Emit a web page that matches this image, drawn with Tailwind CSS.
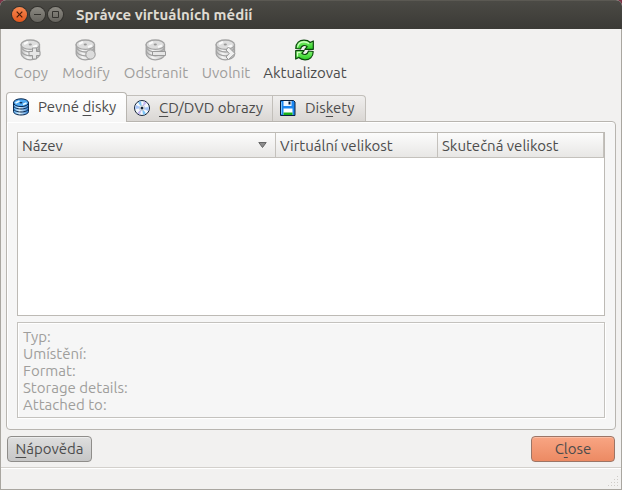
<!DOCTYPE html>
<html lang="cs">
<head>
    <meta charset="UTF-8">
    <meta name="viewport" content="width=device-width, initial-scale=1.0">
    <title>Správce virtuálních médií</title>
    <script src="https://cdn.jsdelivr.net/npm/@tailwindcss/browser@4"></script>
</head>
<body class="bg-[#7d3346]">
    <!-- Shared icon shapes -->
    <svg class="absolute size-0" aria-hidden="true">
        <defs>
            <linearGradient id="metal" x1="0" x2="1">
                <stop offset="0" stop-color="#bcbcbc"/>
                <stop offset=".35" stop-color="#f6f6f6"/>
                <stop offset="1" stop-color="#c0c0c0"/>
            </linearGradient>
            <linearGradient id="blue" x1="0" x2="1">
                <stop offset="0" stop-color="#4aa5f0"/>
                <stop offset=".4" stop-color="#e4f6ff"/>
                <stop offset="1" stop-color="#2c7fd6"/>
            </linearGradient>
            <linearGradient id="green" x1="0" y1="0" x2="0" y2="1">
                <stop offset="0" stop-color="#8af576"/>
                <stop offset="1" stop-color="#27cc20"/>
            </linearGradient>
            <symbol id="disks" viewBox="0 0 22 22">
                <g fill="url(#metal)" stroke="#a4a4a4" stroke-width="1.300">
                    <path d="M1.200 12.500v2.500c.3 3 4.500 5.800 9 5.800s9-2 9.300-4.800v-3.500z"/>
                    <path d="M1.200 9v2.500c.3 3 4.500 5.300 9 5.300s9-1.800 9.300-4.800V9z"/>
                    <path d="M1.200 5.500v2.200c.3 3 4.500 5.300 9 5.300s9-1.800 9.300-4.800V6z"/>
                    <ellipse cx="10.300" cy="5.700" rx="9.200" ry="4.700" fill="#dedede"/>
                </g>
                <path d="M4 5l4-2M13 8l4-1.500" stroke="#fafafa" stroke-width="2"/>
                <ellipse cx="10.300" cy="5.600" rx="1.600" ry="1" fill="#999"/>
            </symbol>
        </defs>
    </svg>

    <div class="flex min-h-screen flex-col overflow-hidden rounded-t-md bg-[#f2f1f0] font-['Ubuntu','Noto_Sans',sans-serif] text-[15px] leading-[17px] text-[#4c4c4c]">
        <!-- Title bar -->
        <header class="flex h-[29px] items-center border-t border-[#5b5953] bg-linear-to-b from-[#4b4a45] to-[#3b3a36] pb-[2px] pl-[12px]">
            <div class="flex gap-[3px]">
                <button aria-label="Zavřít" class="grid size-[15px] place-items-center rounded-full bg-linear-to-b from-[#f7884f] to-[#e2561b] ring-1 ring-[#33322e]">
                    <svg class="size-[7px]" viewBox="0 0 7 7" stroke="#4a1c08" stroke-width="1.200"><path d="M.7.7l5.600 5.600M6.300.7L.7 6.300"/></svg>
                </button>
                <button aria-label="Minimalizovat" class="grid size-[15px] place-items-center rounded-full bg-linear-to-b from-[#8b8982] to-[#66645e] ring-1 ring-[#33322e]">
                    <svg class="size-[7px]" viewBox="0 0 7 7" stroke="#34332f"><path d="M0 3.500h7"/></svg>
                </button>
                <button aria-label="Maximalizovat" class="grid size-[15px] place-items-center rounded-full bg-linear-to-b from-[#8b8982] to-[#66645e] ring-1 ring-[#33322e]">
                    <svg class="size-[7px]" viewBox="0 0 7 7" stroke="#34332f" fill="none"><path d="M.5.5h6v6h-6z"/></svg>
                </button>
            </div>
            <h1 class="ml-[13px] font-bold text-[#dfdbd2]">Správce virtuálních médií</h1>
        </header>

        <main class="flex flex-1 flex-col border-x border-b border-[#a9a6a0]">
            <!-- Toolbar -->
            <div class="flex h-[63px] gap-[13px] pt-[10px] pl-[12px]">
                <button disabled class="flex w-[36px] flex-col items-center gap-[3px] text-[#9f9e9c]">
                    <svg class="size-[22px]" viewBox="0 0 22 22">
                        <use href="#disks"/>
                        <path d="M12.500 9h4v3.500H20v4h-3.500V20h-4v-3.500H9v-4h3.500z" fill="#e6e6e6" stroke="#999"/>
                    </svg>
                    <span>Copy</span>
                </button>
                <button disabled class="flex w-[48px] flex-col items-center gap-[3px] text-[#9f9e9c]">
                    <svg class="size-[22px]" viewBox="0 0 22 22">
                        <use href="#disks"/>
                        <circle cx="15.500" cy="15.500" r="4.700" fill="#dcdcdc" stroke="#999"/>
                    </svg>
                    <span>Modify</span>
                </button>
                <button disabled class="flex w-[66px] flex-col items-center gap-[3px] text-[#9f9e9c]">
                    <svg class="size-[22px]" viewBox="0 0 22 22">
                        <use href="#disks"/>
                        <path d="M7.500 12.500h13v4h-13z" fill="#e6e6e6" stroke="#999"/>
                    </svg>
                    <span>Odstranit</span>
                </button>
                <button disabled class="flex w-[48px] flex-col items-center gap-[3px] text-[#9f9e9c]">
                    <svg class="size-[22px]" viewBox="0 0 22 22">
                        <use href="#disks"/>
                        <path d="M13.500 8l6.500 6.500-6.500 6-2.500-2.500 3.200-3.500-3.200-3.500z" fill="#f0f0f0" stroke="#999"/>
                    </svg>
                    <span>Uvolnit</span>
                </button>
                <button class="flex w-[84px] flex-col items-center gap-[3px]">
                    <svg class="size-[22px]" viewBox="0 0 22 22" fill="url(#green)" stroke="#0b470c" stroke-width="1.200" stroke-linejoin="round">
                        <path d="M1.800 9.500C1.800 4 5.500 1.200 10 1.200c2.800 0 4.800.9 6.200 2.300L19.300 2v8.300h-8.500l2.400-2.600C10.800 5.600 7.500 6.200 6.500 10z"/>
                        <path d="M19.200 12.500c0 5.500-3.700 8.300-8.200 8.300-2.800 0-4.800-.9-6.200-2.300L1.700 20v-8.300h8.500l-2.400 2.600c2.400 2.100 5.700 1.500 6.700-2.300z"/>
                        <path d="M3.500 8.500C4 5 6.500 2.800 10 2.800c2 0 3.700.6 5 1.700M3.500 17.500v-4.200h3" fill="none" stroke="#d2ffc4"/>
                    </svg>
                    <span>Aktualizovat</span>
                </button>
            </div>

            <!-- Tabs -->
            <div role="tablist" class="relative z-10 -mb-px ml-[5px] flex items-end">
                <button role="tab" aria-selected="true" class="flex h-[30px] w-[121px] items-center gap-[8px] rounded-t-[4px] border border-b-0 border-[#b8b5b0] bg-linear-to-b from-white to-[#f6f6f6] pb-[2px] pl-[5px]">
                    <svg class="size-[18px]" viewBox="0 0 18 18">
                        <g fill="url(#blue)" stroke="#07244a">
                            <path d="M1.500 10v3.500c0 2 3.300 3.500 7.500 3.500s7.500-1.500 7.500-3.500V10z"/>
                            <path d="M1.500 7v3.500C1.500 12.500 4.800 14 9 14s7.500-1.500 7.500-3.500V7z"/>
                            <path d="M1.500 4.500v3C1.500 9.500 4.800 11 9 11s7.500-1.500 7.500-3.500v-3z"/>
                            <ellipse cx="9" cy="4.700" rx="7.500" ry="3.900" fill="#4fa9f2"/>
                        </g>
                        <path d="M3.500 5l4-2M11 6.500l3.500-1.500" stroke="#e9f9ff" stroke-width="1.600"/>
                        <ellipse cx="9" cy="4.700" rx="1.500" ry=".8" fill="#07244a"/>
                    </svg>
                    <span>Pevné <u class="underline-offset-[3px]">d</u>isky</span>
                </button>
                <button role="tab" aria-selected="false" class="mb-px flex h-[26px] w-[146px] items-center gap-[8px] border-t border-r border-[#c2bfba] bg-linear-to-b from-[#f0efee] to-[#dad7d4] pb-[2px] pl-[6px]">
                    <svg class="size-[18px]" viewBox="0 0 18 18">
                        <circle cx="9" cy="9" r="7.500" fill="#f4f8fc" stroke="#15263c"/>
                        <path d="M9 9L5 3.500A7 7 0 0 1 8 2.300z" fill="#7cc4f8"/>
                        <path d="M9 9l2-6.500a7 7 0 0 1 2.500 1.500z" fill="#c4b5f2"/>
                        <path d="M9 9l4 5.500a7 7 0 0 1-3 1.200z" fill="#7cc4f8"/>
                        <path d="M9 9l-2 6.500A7 7 0 0 1 4.500 14z" fill="#c4b5f2"/>
                        <path d="M9 9l6.700-1a7 7 0 0 1-.7 4zM9 9l-6.700 1A7 7 0 0 1 3 6z" fill="#a5c4fa"/>
                        <circle cx="9" cy="9" r="2.700" fill="#fff" stroke="#9fb4c8" stroke-width=".6"/>
                        <circle cx="9" cy="9" r="1.500" fill="#15263c"/>
                    </svg>
                    <span><u class="underline-offset-[3px]">C</u>D/DVD obrazy</span>
                </button>
                <button role="tab" aria-selected="false" class="mb-px flex h-[26px] w-[93px] items-center gap-[8px] rounded-tr-[4px] border-t border-r border-[#c2bfba] bg-linear-to-b from-[#f0efee] to-[#dad7d4] pb-[2px] pl-[6px]">
                    <svg class="size-[18px]" viewBox="0 0 18 18">
                        <path d="M1.500 1.500h13l1.500 1.500v13.500h-14.500z" fill="#1c86f0" stroke="#08203f"/>
                        <path d="M4.500 2h8v5h-8z" fill="#f2f8ff"/>
                        <path d="M9.500 2.500h2v3h-2z" fill="#08203f"/>
                        <path d="M2.500 3v12" stroke="#7cc4ff"/>
                        <path d="M4.500 9.500h9V16h-9z" fill="#fff"/>
                        <path d="M4.500 13.500h9V16h-9z" fill="#17b01b"/>
                    </svg>
                    <span>Dis<u class="underline-offset-[3px]">k</u>ety</span>
                </button>
            </div>

            <!-- Tab page -->
            <section role="tabpanel" class="mx-[5px] flex flex-1 flex-col gap-[6px] rounded-[4px] rounded-tl-none border border-[#b8b5b0] bg-[#f6f6f6] p-[10px] pb-[11px] shadow-[inset_0_1px_0_#fff,inset_1px_0_0_#fff]">
                <div class="min-h-[120px] flex-1 border border-[#bdbab5] bg-white">
                    <table class="w-full table-fixed border-separate border-spacing-0">
                        <thead>
                            <tr class="h-[25px] bg-linear-to-b from-[#fcfcfc] to-[#e7e6e4] text-left">
                                <th aria-sort="descending" class="border-r border-b border-[#c4c1bc] px-[4px] font-normal">
                                    <div class="flex items-center justify-between pr-[4px]">
                                        <span>Název</span>
                                        <svg class="h-[6px] w-[9px]" viewBox="0 0 9 6"><path d="M.8.5h7.400L4.500 5.500z" fill="#8c8c8c" stroke="#666"/></svg>
                                    </div>
                                </th>
                                <th class="w-[162px] border-r border-b border-[#c4c1bc] px-[4px] font-normal">Virtuální velikost</th>
                                <th class="w-[166px] border-r border-b border-[#c4c1bc] px-[4px] font-normal">Skutečná velikost</th>
                            </tr>
                        </thead>
                        <tbody></tbody>
                    </table>
                </div>
                <dl class="border border-[#c4c2be] px-[5px] pt-[5px] pb-[4px] text-[#9f9e9c] shadow-[inset_1px_1px_0_#fff,1px_1px_0_#fff]">
                    <dt>Typ:</dt>
                    <dt>Umístění:</dt>
                    <dt>Format:</dt>
                    <dt>Storage details:</dt>
                    <dt>Attached to:</dt>
                </dl>
            </section>

            <!-- Dialog buttons -->
            <div class="flex justify-between px-[6px] pt-[6px] pb-[5px]">
                <button class="h-[26px] w-[85px] rounded-[4px] border border-[#8f8d8a] bg-linear-to-b from-[#dedede] to-[#c6c6c6] pb-[2px] shadow-[inset_0_1px_0_#ececec]"><u class="underline-offset-[3px]">N</u>ápověda</button>
                <button class="h-[26px] w-[84px] rounded-[4px] border border-[#9c7566] bg-linear-to-b from-[#f8a583] to-[#ec8a63] pb-[2px] shadow-[inset_0_1px_0_#fbbda4]">C<u class="underline-offset-[3px]">l</u>ose</button>
            </div>

            <!-- Status bar -->
            <footer class="flex h-[22px] items-end justify-end border-t border-[#d3d0cc] pr-[2px] pb-[2px] shadow-[inset_0_1px_0_#fff]">
                <svg class="size-[11px]" viewBox="0 0 11 11" fill="#cfccc8">
                    <path d="M9 0h1v1H9zM6 3h1v1H6zM9 3h1v1H9zM3 6h1v1H3zM6 6h1v1H6zM9 6h1v1H9zM0 9h1v1H0zM3 9h1v1H3zM6 9h1v1H6zM9 9h1v1H9z"/>
                </svg>
            </footer>
        </main>
    </div>
</body>
</html>
